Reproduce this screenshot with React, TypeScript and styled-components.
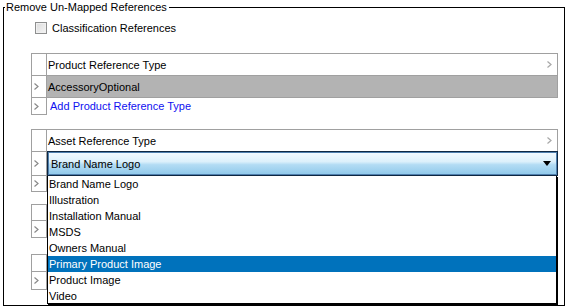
import styled, { createGlobalStyle } from "styled-components"

const GlobalStyle = createGlobalStyle`
  html, body {
    margin: 0;
    padding: 0;
    background: #fff;
  }
  body {
    font-family: "Liberation Sans", Arial, sans-serif;
    font-size: 11px;
    color: #000;
  }
`

const Frame = styled.fieldset`
  box-sizing: border-box;
  width: 562px;
  height: 306px;
  margin: 0 0 0 3px;
  padding: 0;
  border: 1px solid #000;
  min-width: 0;
`

const Legend = styled.legend`
  padding: 0 2px 0 1px;
  margin-left: 1px;
  line-height: 14px;
  font-size: 11px;
`

const Body = styled.div`
  display: flex;
  flex-direction: column;
  padding: 0 6px 0 27px;
`

const CheckRow = styled.label`
  display: flex;
  align-items: center;
  gap: 5px;
  height: 13px;
  margin: 7px 0 0 4px;
  font-size: 11px;
`

const CheckBox = styled.span`
  box-sizing: border-box;
  width: 12px;
  height: 12px;
  border: 1px solid #8e8f8f;
  background: linear-gradient(135deg, #dcdcdc, #f4f4f4);
  box-shadow: inset 0 0 0 1px #f0f0f0;
`

const Grid = styled.div<{ $top: number }>`
  display: flex;
  flex-direction: column;
  margin-top: ${(p) => p.$top}px;
`

const Row = styled.div<{ $h: number }>`
  display: grid;
  grid-template-columns: 16px 1fr;
  height: ${(p) => p.$h}px;
  margin-top: -1px;
  &:first-child {
    margin-top: 0;
  }
`

const Handle = styled.div`
  box-sizing: border-box;
  border: 1px solid #a0a0a0;
  display: flex;
  align-items: center;
  padding-left: 2px;
`

const HeaderCell = styled.div`
  box-sizing: border-box;
  border: 1px solid #a0a0a0;
  border-left: none;
  display: flex;
  align-items: center;
  justify-content: space-between;
  padding: 0 5px 0 1px;
`

const ValueCell = styled.div`
  box-sizing: border-box;
  border: 1px solid #a0a0a0;
  border-left: none;
  background: #b3b3b3;
  display: flex;
  align-items: center;
  padding-left: 1px;
`

const LinkCell = styled.div`
  display: flex;
  align-items: center;
  padding-left: 3px;
  color: #1010f0;
`

const DropWrap = styled.div`
  position: relative;
  display: flex;
`

const Drop = styled.div`
  box-sizing: border-box;
  flex: 1;
  display: flex;
  align-items: center;
  justify-content: space-between;
  padding: 0 6px 0 3px;
  border: 1px solid #0e2742;
  box-shadow: inset 0 0 0 1px #4f7fae;
  background: linear-gradient(
    to bottom,
    #f3faff 0%,
    #dcf0fb 42%,
    #b3dcf4 55%,
    #8fc8ea 100%
  );
`

const List = styled.ul`
  position: absolute;
  top: 100%;
  left: 0;
  right: 1px;
  box-sizing: border-box;
  height: 128px;
  margin: 0;
  padding: 0;
  list-style: none;
  background: #fff;
  border: 1px solid #000;
  border-top: none;
  box-shadow: 1px 1px 0 #000;
  overflow: hidden;
  z-index: 2;
`

const Item = styled.li<{ $selected?: boolean }>`
  height: 16px;
  line-height: 16px;
  padding-left: 1px;
  background: ${(p) => (p.$selected ? "#0072bc" : "transparent")};
  color: ${(p) => (p.$selected ? "#fff" : "#000")};
`

const Chevron = ({ color = "#8a8a8a" }: { color?: string }) => (
  <svg width="5" height="7" viewBox="0 0 5 7">
    <polyline points="0.5,0.5 4,3.5 0.5,6.5" fill="none" stroke={color} strokeWidth="1.2" />
  </svg>
)

const Caret = () => (
  <svg width="8" height="5" viewBox="0 0 8 5">
    <polygon points="0,0 8,0 4,5" fill="#000" />
  </svg>
)

const options = [
  "Brand Name Logo",
  "Illustration",
  "Installation Manual",
  "MSDS",
  "Owners Manual",
  "Primary Product Image",
  "Product Image",
  "Video",
]

export default function App() {
  return (
    <>
      <GlobalStyle />
      <Frame>
        <Legend>Remove Un-Mapped References</Legend>
        <Body>
          <CheckRow>
            <CheckBox />
            Classification References
          </CheckRow>

          <Grid $top={19}>
            <Row $h={23}>
              <Handle />
              <HeaderCell>
                Product Reference Type
                <Chevron color="#a8a8a8" />
              </HeaderCell>
            </Row>
            <Row $h={23}>
              <Handle>
                <Chevron />
              </Handle>
              <ValueCell>AccessoryOptional</ValueCell>
            </Row>
            <Row $h={18}>
              <Handle>
                <Chevron />
              </Handle>
              <LinkCell>Add Product Reference Type</LinkCell>
            </Row>
          </Grid>

          <Grid $top={14}>
            <Row $h={23}>
              <Handle />
              <HeaderCell>
                Asset Reference Type
                <Chevron color="#a8a8a8" />
              </HeaderCell>
            </Row>
            <Row $h={25}>
              <Handle>
                <Chevron />
              </Handle>
              <DropWrap>
                <Drop>
                  Brand Name Logo
                  <Caret />
                </Drop>
                <List>
                  {options.map((o) => (
                    <Item key={o} $selected={o === "Primary Product Image"}>
                      {o}
                    </Item>
                  ))}
                </List>
              </DropWrap>
            </Row>
            <Row $h={17}>
              <Handle>
                <Chevron />
              </Handle>
              <span />
            </Row>
          </Grid>

          <Grid $top={12}>
            <Row $h={17}>
              <Handle />
              <HeaderCell />
            </Row>
            <Row $h={18}>
              <Handle>
                <Chevron />
              </Handle>
              <span />
            </Row>
          </Grid>

          <Grid $top={16}>
            <Row $h={18}>
              <Handle />
              <HeaderCell />
            </Row>
            <Row $h={19}>
              <Handle>
                <Chevron />
              </Handle>
              <span />
            </Row>
          </Grid>
        </Body>
      </Frame>
    </>
  )
}
